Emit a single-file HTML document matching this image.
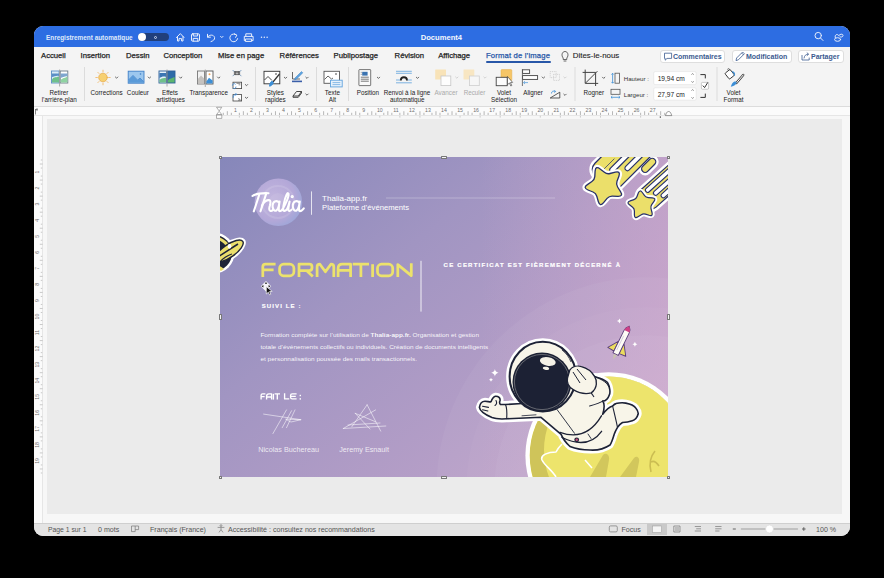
<!DOCTYPE html>
<html><head><meta charset="utf-8">
<style>
*{margin:0;padding:0;box-sizing:border-box}
html,body{width:884px;height:578px;overflow:hidden;background:#000}
body{position:relative;font-family:"Liberation Sans",sans-serif}
.a{position:absolute}
.t{position:absolute;white-space:nowrap;line-height:1}
#win{position:absolute;left:34px;top:26px;width:816px;height:510px;border-radius:9px;overflow:hidden;background:#f4f4f4}
#title{position:absolute;left:0;top:0;width:816px;height:21px;background:#2d6de2}
#tabs{position:absolute;left:0;top:21px;width:816px;height:18px;background:#f4f4f4}
#ribbon{position:absolute;left:0;top:38px;width:816px;height:43px;background:#f4f4f4;border-bottom:1px solid #dcdcdc}
.tab{font-size:7.7px;color:#222;-webkit-text-stroke:0.25px #222}
.lbl{font-size:6.3px;color:#222;text-align:center}
.sep{position:absolute;width:1px;background:#dadada;top:67px;height:34px}
.chev{position:absolute;width:4px;height:4px;border-right:1px solid #444;border-bottom:1px solid #444;transform:rotate(45deg)}
.btn{position:absolute;top:50px;height:13px;background:#fff;border:1px solid #dedede;border-radius:3px}
.st{font-size:7.1px;color:#555;top:526.8px}
</style></head>
<body>
<div id="win">
  <div id="title"></div>
  <div id="tabs"></div>
  <div id="ribbon"></div>
</div>

<!-- title bar content -->
<div class="t" style="left:46px;top:34.6px;font-size:6.4px;font-weight:bold;color:#dfe9fb">Enregistrement automatique</div>
<div class="a" style="left:138px;top:33px;width:31px;height:8px;border-radius:4px;background:#213f7a"></div>
<div class="a" style="left:138px;top:33px;width:8px;height:8px;border-radius:4px;background:#fff"></div>
<div class="a" style="left:154px;top:35.5px;width:3px;height:3px;border-radius:2px;border:0.8px solid #c9d6ee"></div>
<div class="t" style="left:420.7px;top:33.6px;font-size:7.6px;font-weight:bold;color:#f4f7fd">Document4</div>

<!-- tabs -->
<div class="t tab" style="left:41px;top:52px">Accueil</div>
<div class="t tab" style="left:80.5px;top:52px">Insertion</div>
<div class="t tab" style="left:126px;top:52px">Dessin</div>
<div class="t tab" style="left:163.4px;top:52px">Conception</div>
<div class="t tab" style="left:218px;top:52px">Mise en page</div>
<div class="t tab" style="left:279.6px;top:52px">Références</div>
<div class="t tab" style="left:333.6px;top:52px">Publipostage</div>
<div class="t tab" style="left:394.6px;top:52px">Révision</div>
<div class="t tab" style="left:438.2px;top:52px">Affichage</div>
<div class="t tab" style="left:486px;top:52px;color:#2857a8;-webkit-text-stroke:0.25px #2857a8;letter-spacing:0.15px">Format de l’image</div>
<div class="a" style="left:486px;top:61px;width:65px;height:2px;background:#2857a8;border-radius:1px"></div>
<div class="t tab" style="left:572.8px;top:52px;-webkit-text-stroke:0.1px #222;font-size:7.9px">Dites-le-nous</div>

<div class="btn" style="left:660px;width:65px"></div>
<div class="btn" style="left:731.5px;width:60px"></div>
<div class="btn" style="left:797.5px;width:46.5px"></div>
<div class="t" style="left:673px;top:53px;font-size:7px;font-weight:bold;color:#3b5a8f">Commentaires</div>
<div class="t" style="left:746px;top:53px;font-size:7px;font-weight:bold;color:#3b5a8f">Modification</div>
<div class="t" style="left:811px;top:53px;font-size:7px;font-weight:bold;color:#3b5a8f">Partager</div>


<svg class="a" style="left:0;top:0" width="884" height="578" viewBox="0 0 884 578">
<g fill="none" stroke="#e8eefc" stroke-width="1" stroke-linecap="round" stroke-linejoin="round">
  <!-- home -->
  <path d="M176.5 37.5 L180.3 33.6 L184 37.5 M177.5 36.6 V41 H179 V38.6 H181.6 V41 H183 V36.6"/>
  <!-- save -->
  <rect x="191.5" y="33.8" width="8" height="7.4" rx="1.2"/>
  <path d="M193.3 34 V36 H197.6 V34 M193.2 41 V38.4 H197.8 V41"/>
  <!-- undo -->
  <path d="M207.5 34.3 V37.2 H210.4 M207.8 37 C209 34.5 213.8 34.2 214.6 37.6 C215 39.6 213 41 211 41.6"/>
  <path d="M220.6 36.4 L221.8 37.6 L223 36.4"/>
  <!-- redo -->
  <path d="M236.6 35.2 A3.9 3.9 0 1 0 237.6 38.6 M234.4 33.8 L236.8 35.2 L235.6 37.4"/>
  <!-- print -->
  <path d="M245.8 36 V33.8 H251.6 V36 M245.6 40.6 H244.3 V36.4 H253.1 V40.6 H251.8 M245.8 39 H251.6 V41.4 H245.8 Z"/>
  <!-- search -->
  <circle cx="818.2" cy="35.6" r="3.2"/>
  <path d="M820.5 38 L823 40.5"/>
  <!-- collab -->
  <ellipse cx="837.6" cy="39.5" rx="3" ry="1.8"/>
  <path d="M835.3 37.6 C834.5 35 836.6 33.8 838 34.8 M838.4 35.8 C839.5 34.2 843 33.2 843 35.6 C843 37 840.8 37.5 840 36.8"/>
</g>
<g fill="#e8eefc"><circle cx="261.5" cy="37.3" r="0.75"/><circle cx="264.3" cy="37.3" r="0.75"/><circle cx="267.1" cy="37.3" r="0.75"/></g>

<!-- ribbon icons -->
<!-- Retirer arriere-plan -->
<g>
  <rect x="51.5" y="71" width="7.6" height="12" fill="#dcecf7" stroke="#5b8fc6" stroke-width="0.9"/>
  <rect x="60.2" y="71" width="7.6" height="12" fill="#fff" stroke="#6b7a88" stroke-width="0.9"/>
  <path d="M52 79.5 C54 76 56.5 78 59 76.5 V82.6 H52 Z" fill="#6fc08b"/>
  <path d="M60.6 80 C63 77.5 65 78.5 67.4 76.5 V82.6 H60.6 Z" fill="#8fd3a1"/>
  <path d="M52 73.5 H59 V76 C57 75 54 76.5 52 77 Z" fill="#5b8fc6"/>
  <path d="M60.6 73.5 H67.4 V76.3 C65 76 62.5 77.5 60.6 78 Z" fill="#7ea6cf"/>
  <path d="M59.6 69.5 V86.5" stroke="#999" stroke-width="0.8"/>
</g>
<!-- sun -->
<g stroke="#f0b35a" stroke-width="0.8" stroke-linecap="round">
  <circle cx="103" cy="77.5" r="4.3" fill="#f7d070" stroke="#e9ad4f"/>
  <path d="M103 70.2 V71.8 M103 83.2 V84.8 M95.8 77.5 H97.4 M108.6 77.5 H110.2 M97.9 72.4 L99 73.5 M107 81.5 L108.1 82.6 M97.9 82.6 L99 81.5 M107 73.5 L108.1 72.4"/>
</g>
<!-- couleur -->
<g>
  <rect x="128.2" y="71.2" width="15.8" height="12" fill="#9cc7ee" stroke="#3f7fc6" stroke-width="0.9"/>
  <path d="M128.6 80 L133 75.5 L137.6 80.2 L140 78 L143.6 81.8" fill="none" stroke="#3f7fc6" stroke-width="0.9"/>
  <path d="M128.6 80 L133 75.5 L137.6 80.2 L140 78 L143.6 81.8 V82.8 H128.6Z" fill="#5a9ad8"/>
  <circle cx="140.5" cy="74" r="0.8" fill="#3f7fc6"/>
</g>
<!-- effets artistiques -->
<g>
  <rect x="159" y="71" width="7.5" height="12" fill="#e5f1f9" stroke="#2d5f99" stroke-width="0.9"/>
  <rect x="167.5" y="71" width="7.5" height="12" fill="#2d6ba8" stroke="#2d5f99" stroke-width="0.9"/>
  <path d="M159.4 73 H166 V77 C164 76 161 77 159.4 78Z" fill="#3b76b3"/>
  <path d="M159.4 80 C161.5 78 164 78.5 166 77.6 V82.6 H159.4Z" fill="#6fc08b"/>
  <path d="M167.9 80.5 C170 78 172 78.5 174.6 77 V82.6 H167.9Z" fill="#5cb56e"/>
  <path d="M167 69.5 V86.5" stroke="#999" stroke-width="0.8"/>
</g>
<!-- transparence -->
<g>
  <rect x="197.5" y="71" width="7" height="13" fill="#f2f2f2" stroke="#777" stroke-width="0.9"/>
  <rect x="206" y="71" width="7" height="13" fill="#fff" stroke="#555" stroke-width="0.9"/>
  <path d="M197.9 83.6 V79 L201 75.5 L204.2 78.5 V83.6Z" fill="#c5c2bf"/>
  <path d="M206.4 81.5 L209 77.8 L212.6 80.5 V83.6 H206.4Z" fill="#3d8fd6"/>
  <circle cx="209.5" cy="74.3" r="1" fill="#f2a55a"/>
  <path d="M205.3 69.5 V87" stroke="#999" stroke-width="0.8"/>
</g>
<!-- small icons col -->
<g fill="none" stroke-width="0.8">
  <path d="M232.6 70 L234.6 72 M241.4 70 L239.4 72 M232.6 76.2 L234.6 74.2 M241.4 76.2 L239.4 74.2" stroke="#6a8fb8"/>
  <path d="M234.4 71.6 H239.6 V74.6 H234.4 Z M235.6 74.6 V71.8 L237 73.4 L238.4 71.8 V74.6" stroke="#333" stroke-width="0.7"/>
  <rect x="233" y="82.2" width="8.6" height="6.4" fill="#fff" stroke="#444"/>
  <path d="M236.5 83.4 H240.4 M238.6 84.8 H240.4" stroke="#444" stroke-width="0.6"/>
  <path d="M232.4 85.6 C232.4 83.6 234.6 83 235.6 84.4 M236 86.6 C236 88.8 233.6 89.2 232.8 87.8" stroke="#4a90d6" stroke-width="0.9"/>
  <rect x="233" y="94.6" width="8.6" height="6.4" fill="#fff" stroke="#444"/>
  <path d="M238.4 98 L240.6 100.4 M238 100.2 H240.4" stroke="#444" stroke-width="0.6"/>
  <path d="M233.2 97.8 C233 95.2 234.8 93.8 236.6 94.4 M235.6 93.2 L236.8 94.4 L235.4 95.4" stroke="#4a90d6" stroke-width="0.9"/>
</g>
<!-- styles rapides -->
<g fill="none" stroke-width="0.9">
  <rect x="264" y="71.3" width="15.8" height="12.5" stroke="#333" fill="#fff"/>
  <path d="M264.5 80 L268 76.5 L272 80.5" stroke="#333"/>
  <circle cx="276" cy="74" r="0.8" fill="#333" stroke="none"/>
  <path d="M279.5 74 L273 82" stroke="#333" stroke-width="1.2"/>
  <path d="M269.5 86.2 C271 86 273 84.5 273.4 82.4 L272 81.2 C270 82 269.6 84.5 269.5 86.2Z" fill="#3d8fd6" stroke="#3d8fd6"/>
</g>
<!-- pen -->
<g>
  <path d="M292.5 72 V79 H300" fill="none" stroke="#444" stroke-width="0.8"/>
  <path d="M295 78 L301.5 71.5 L302.8 72.8 L296.3 79.3 L294.6 79.8Z" fill="#5ba3e0" stroke="#3d7fc0" stroke-width="0.5"/>
  <rect x="292" y="80.6" width="10" height="1.6" fill="#3a5ea8"/>
</g>
<!-- eraser -->
<g fill="none" stroke="#333" stroke-width="0.9">
  <path d="M293 96 L296.5 91.5 H301.5 L298.3 96 Z M293 96 V97.3 H298.3 L301.5 93 V91.5"/>
</g>
<!-- texte alt -->
<g fill="none" stroke-width="0.9">
  <rect x="324" y="71.3" width="15.5" height="12" stroke="#555" fill="#fff"/>
  <path d="M324.5 79.5 L328 76 L331.5 79 L333 78" stroke="#555"/>
  <circle cx="336" cy="74" r="0.8" fill="#333" stroke="none"/>
  <rect x="330.5" y="80.2" width="11.7" height="6.7" fill="#e8f2fb" stroke="#5ea2dd"/>
  <path d="M332.5 82.6 H340.3 M332.5 84.6 H340.3" stroke="#5ea2dd" stroke-width="0.7"/>
</g>
<!-- position -->
<g fill="none" stroke-width="0.8">
  <rect x="358.9" y="69.6" width="11.8" height="16" fill="#fafafa" stroke="#555" rx="0.5"/>
  <rect x="362.2" y="71.8" width="5.4" height="3.8" fill="#3b73b0" stroke="none"/>
  <path d="M360.8 72.3 H361.6 M360.8 74.3 H361.6 M360.8 77.2 H368.8 M360.8 79.2 H368.8 M360.8 81.2 H368.8" stroke="#555"/>
</g>
<!-- renvoi -->
<g fill="none">
  <path d="M396 71.3 H411.8 M396 73.3 H411.8 M396 80 H400 M407.8 80 H411.8 M396 82.8 H411.8" stroke="#5ea2dd" stroke-width="0.8"/>
  <path d="M400.8 80.4 C400.8 76.2 407 76.2 407 80.4" stroke="#222" stroke-width="1.8"/>
</g>
<!-- avancer / reculer -->
<g>
  <rect x="435.2" y="69.6" width="10.8" height="10" fill="#f8e3b8" rx="0.5"/>
  <rect x="441" y="76" width="9.8" height="9.6" fill="#fdfdfd" stroke="#c7c7c7" stroke-width="0.8"/>
  <rect x="463.5" y="69.6" width="10.8" height="10" fill="#f8e6c2" rx="0.5"/>
  <rect x="469.5" y="76" width="9.8" height="9.6" fill="#f6f6f6" stroke="#cfcfcf" stroke-width="0.8"/>
</g>
<!-- volet selection -->
<g>
  <rect x="501" y="69.6" width="10.8" height="11" fill="#f6c667" stroke="#e3ad47" stroke-width="0.5" rx="0.8"/>
  <rect x="496.2" y="77.3" width="11" height="8.4" fill="#fcfcfc" stroke="#444" stroke-width="0.9"/>
  <path d="M507.5 76.5 V84.6 L509.4 83 L510.8 86 L511.8 85.5 L510.4 82.6 L512.6 82.4Z" fill="#fff" stroke="#333" stroke-width="0.6"/>
</g>
<!-- aligner -->
<g fill="none" stroke="#444" stroke-width="0.9">
  <rect x="522.6" y="69.8" width="7" height="3.6" fill="#fff"/>
  <rect x="522.6" y="75.6" width="15" height="3.8" fill="#fff"/>
  <path d="M522.4 69 V86" stroke="#555" stroke-width="0.8"/>
  <path d="M523.5 82.6 H528 M523.5 82.6 L525 81.2 M523.5 82.6 L525 84" stroke="#5ea2dd" stroke-width="0.8"/>
</g>
<g fill="none" stroke="#c9c9c9" stroke-width="0.8" stroke-dasharray="1 0.8">
  <rect x="550.2" y="71.6" width="6" height="6"/>
  <rect x="553.5" y="74.4" width="6" height="6"/>
</g>
<g fill="none" stroke-width="0.8">
  <path d="M550.2 98 H559.8 V92.2Z" stroke="#333"/>
  <path d="M551.5 93.5 C551.5 91 553.5 90.6 555.4 91.5 M554.4 90.2 L555.6 91.5 L554.2 92.5" stroke="#3d8fd6"/>
</g>
<!-- rogner -->
<g fill="none" stroke="#444" stroke-width="1">
  <path d="M585.2 69.6 V83.4 H598.2 M582.6 72.4 H595.6 V86 M585.6 83 L597.4 71.2"/>
</g>
<!-- hauteur/largeur icons -->
<g fill="none" stroke-width="0.8">
  <rect x="615" y="73.2" width="4.6" height="10" stroke="#555"/>
  <path d="M612.6 73.3 V83.2 M611.4 74.6 L612.6 73.3 L613.8 74.6 M611.4 81.9 L612.6 83.2 L613.8 81.9" stroke="#3d8fd6"/>
  <rect x="611" y="89.3" width="9" height="5" stroke="#555"/>
  <path d="M611 97.3 H620 M612.3 96.1 L611 97.3 L612.3 98.5 M618.7 96.1 L620 97.3 L618.7 98.5" stroke="#3d8fd6"/>
</g>
<!-- inputs -->
<rect x="653.7" y="71.6" width="42.5" height="13" fill="#fff" stroke="#e0e0e0" stroke-width="0.6" rx="1.5"/>
<rect x="653.7" y="87.8" width="42.5" height="12.4" fill="#fff" stroke="#e0e0e0" stroke-width="0.6" rx="1.5"/>
<g fill="none" stroke="#444" stroke-width="0.7">
  <path d="M691.6 74.6 L692.6 73.6 L693.6 74.6 M691.6 81.4 L692.6 82.4 L693.6 81.4"/>
  <path d="M691.6 90.6 L692.6 89.6 L693.6 90.6 M691.6 97.4 L692.6 98.4 L693.6 97.4"/>
  <path d="M700.4 74.6 H705.3 V78.4 M700.4 97.4 H705.3 V93.6" stroke="#333" stroke-width="1"/>
</g>
<rect x="701.4" y="82.4" width="7.2" height="6.8" fill="#fff" stroke="#aaa" stroke-width="0.6" rx="1"/>
<path d="M702.8 85.6 L704.6 87.6 L707.8 82.4" fill="none" stroke="#333" stroke-width="1"/>
<!-- volet format -->
<g>
  <rect x="726.4" y="70.6" width="6.6" height="7.4" rx="1" transform="rotate(-38 729.7 74.3)" fill="#fff" stroke="#333" stroke-width="0.9"/>
  <path d="M727.4 69.4 C728.2 68.4 729.4 68.6 729.8 69.6" fill="none" stroke="#333" stroke-width="0.8"/>
  <path d="M732.2 71.6 C734 72.2 734.8 73.8 734.4 75.6" fill="none" stroke="#3d8fd6" stroke-width="1.2"/>
  <path d="M743.2 75 L736.4 83" stroke="#444" stroke-width="2.4" stroke-linecap="round"/>
  <path d="M743.2 75 L736.4 83" stroke="#fff" stroke-width="1" stroke-linecap="round"/>
  <path d="M730.8 86.8 C733 86.6 736 85 736.8 82.6 L735.2 81.2 C732.8 81.8 731.4 84.4 730.8 86.8Z" fill="#3d8fd6"/>
</g>
<!-- chevrons -->
<g fill="none" stroke="#444" stroke-width="0.8" stroke-linecap="round">
  <path d="M115.4 77 L116.6 78.2 L117.8 77"/>
  <path d="M148.2 77 L149.4 78.2 L150.6 77"/>
  <path d="M179.5 77 L180.7 78.2 L181.9 77"/>
  <path d="M217.5 77 L218.7 78.2 L219.9 77"/>
  <path d="M245.3 84.5 L246.5 85.7 L247.7 84.5"/>
  <path d="M245.3 97.2 L246.5 98.4 L247.7 97.2"/>
  <path d="M284.3 77.2 L285.5 78.4 L286.7 77.2"/>
  <path d="M305.8 77.2 L307 78.4 L308.2 77.2"/>
  <path d="M305.8 94 L307 95.2 L308.2 94"/>
  <path d="M377.3 77.2 L378.5 78.4 L379.7 77.2"/>
  <path d="M416.3 77.2 L417.5 78.4 L418.7 77.2"/>
  <path d="M542.2 77 L543.4 78.2 L544.6 77"/>
  <path d="M563.8 94.2 L565 95.4 L566.2 94.2"/>
  <path d="M602.5 77.2 L603.7 78.4 L604.9 77.2"/>
</g>
<g fill="none" stroke="#c9c9c9" stroke-width="0.8" stroke-linecap="round">
  <path d="M455.6 77 L456.8 78.2 L458 77"/>
  <path d="M483.8 77 L485 78.2 L486.2 77"/>
  <path d="M563.8 77 L565 78.2 L566.2 77"/>
</g>
<!-- separators -->
<g stroke="#dcdcdc" stroke-width="1">
  <path d="M84.5 67 V101 M255.5 67 V101 M316.5 67 V101 M348.5 67 V101 M575 67 V101 M717 67 V101"/>
</g>
</svg>

<div class="t lbl" style="left:19.0px;top:89.8px;width:80px;color:#222">Retirer</div>
<div class="t lbl" style="left:19.2px;top:97.1px;width:80px;color:#222">l’arrière-plan</div>
<div class="t lbl" style="left:66.5px;top:90.0px;width:80px;color:#222">Corrections</div>
<div class="t lbl" style="left:97.9px;top:90.0px;width:80px;color:#222">Couleur</div>
<div class="t lbl" style="left:130.0px;top:90.0px;width:80px;color:#222">Effets</div>
<div class="t lbl" style="left:130.5px;top:96.8px;width:80px;color:#222">artistiques</div>
<div class="t lbl" style="left:168.7px;top:90.0px;width:80px;color:#222">Transparence</div>
<div class="t lbl" style="left:235.4px;top:90.0px;width:80px;color:#222">Styles</div>
<div class="t lbl" style="left:235.4px;top:96.7px;width:80px;color:#222">rapides</div>
<div class="t lbl" style="left:292.4px;top:90.0px;width:80px;color:#222">Texte</div>
<div class="t lbl" style="left:292.4px;top:96.7px;width:80px;color:#222">Alt</div>
<div class="t lbl" style="left:327.9px;top:90.0px;width:80px;color:#222">Position</div>
<div class="t lbl" style="left:367.0px;top:90.0px;width:80px;color:#222">Renvoi à la ligne</div>
<div class="t lbl" style="left:367.3px;top:96.8px;width:80px;color:#222">automatique</div>
<div class="t lbl" style="left:406.0px;top:90.0px;width:80px;color:#a9a9a9">Avancer</div>
<div class="t lbl" style="left:434.5px;top:90.0px;width:80px;color:#a9a9a9">Reculer</div>
<div class="t lbl" style="left:464.0px;top:90.0px;width:80px;color:#222">Volet</div>
<div class="t lbl" style="left:464.0px;top:96.8px;width:80px;color:#222">Sélection</div>
<div class="t lbl" style="left:493.0px;top:90.0px;width:80px;color:#222">Aligner</div>
<div class="t lbl" style="left:553.9px;top:90.0px;width:80px;color:#222">Rogner</div>
<div class="t lbl" style="left:693.6px;top:90.0px;width:80px;color:#222">Volet</div>
<div class="t lbl" style="left:693.6px;top:96.8px;width:80px;color:#222">Format</div>
<div class="t" style="left:623.8px;top:76.2px;font-size:6.1px;color:#333">Hauteur :</div>
<div class="t" style="left:623.8px;top:92px;font-size:6.1px;color:#333">Largeur :</div>
<div class="t" style="left:657.7px;top:75.9px;font-size:6.6px;color:#222">19,94 cm</div>
<div class="t" style="left:657.7px;top:91.7px;font-size:6.6px;color:#222">27,97 cm</div>
<svg class="a" style="left:0;top:0" width="884" height="578" viewBox="0 0 884 578">
<g fill="none" stroke="#3b5a8f" stroke-width="0.8" stroke-linejoin="round">
  <path d="M563.2 58 C561 55.5 562 51.5 565 51.5 C568 51.5 569 55.5 566.8 58 V59.5 H563.2 Z M563.6 61 H566.4" stroke="#444"/>
  <path d="M664.5 53.2 H671.6 V58.4 H667 L665.2 60.2 V58.4 H664.5 Z"/>
  <path d="M736 60.6 L736.6 58 L742.6 52 L744.4 53.8 L738.4 59.8 Z M741.6 53 L743.4 54.8"/>
  <path d="M802 55 V60 H809.2 V57.6 M804 58.4 C804.4 55.4 806 54.2 808.4 54.2 M806.8 52.6 L808.6 54.2 L806.8 55.8"/>
</g>
</svg>
<!-- ruler -->
<div class="a" style="left:34px;top:107px;width:816px;height:9px;background:#fbfbfb;border-bottom:1px solid #e6e6e6"></div>
<!-- vertical ruler -->
<div class="a" style="left:34px;top:116px;width:9px;height:407px;background:#fbfbfb;border-right:1px solid #e6e6e6"></div>
<!-- doc area -->
<div class="a" style="left:43px;top:116px;width:807px;height:407px;background:#f7f7f7"></div>
<div class="a" style="left:47px;top:119px;width:795px;height:395px;background:#ebebeb"></div>
<!-- status bar -->
<div class="a" style="left:34px;top:523px;width:816px;height:13px;background:#e4e4e4;border-top:1px solid #cfcfcf;border-radius:0 0 9px 9px"></div>
<div class="t st" style="left:48px;font-size:6.8px">Page 1 sur 1</div>
<div class="t st" style="left:98px">0 mots</div>
<div class="t st" style="left:150px">Français (France)</div>
<div class="t st" style="left:228px">Accessibilité : consultez nos recommandations</div>
<div class="t st" style="left:621.4px">Focus</div>
<div class="t st" style="left:816px">100 %</div>

<svg class="a" style="left:0;top:0" width="884" height="578" viewBox="0 0 884 578">
<path d="M223.31 112.8 V115 M227.33 111.2 V115 M231.34 112.8 V115 M239.36 112.8 V115 M243.38 111.2 V115 M247.39 112.8 V115 M255.41 112.8 V115 M259.43 111.2 V115 M263.44 112.8 V115 M271.46 112.8 V115 M275.48 111.2 V115 M279.49 112.8 V115 M287.51 112.8 V115 M291.53 111.2 V115 M295.54 112.8 V115 M303.56 112.8 V115 M307.58 111.2 V115 M311.59 112.8 V115 M319.61 112.8 V115 M323.62 111.2 V115 M327.64 112.8 V115 M335.66 112.8 V115 M339.68 111.2 V115 M343.69 112.8 V115 M351.71 112.8 V115 M355.73 111.2 V115 M359.74 112.8 V115 M367.76 112.8 V115 M371.77 111.2 V115 M375.79 112.8 V115 M383.81 112.8 V115 M387.83 111.2 V115 M391.84 112.8 V115 M399.86 112.8 V115 M403.88 111.2 V115 M407.89 112.8 V115 M415.91 112.8 V115 M419.93 111.2 V115 M423.94 112.8 V115 M431.96 112.8 V115 M435.98 111.2 V115 M439.99 112.8 V115 M448.01 112.8 V115 M452.03 111.2 V115 M456.04 112.8 V115 M464.06 112.8 V115 M468.08 111.2 V115 M472.09 112.8 V115 M480.11 112.8 V115 M484.12 111.2 V115 M488.14 112.8 V115 M496.16 112.8 V115 M500.18 111.2 V115 M504.19 112.8 V115 M512.21 112.8 V115 M516.23 111.2 V115 M520.24 112.8 V115 M528.26 112.8 V115 M532.28 111.2 V115 M536.29 112.8 V115 M544.31 112.8 V115 M548.33 111.2 V115 M552.34 112.8 V115 M560.36 112.8 V115 M564.38 111.2 V115 M568.39 112.8 V115 M576.41 112.8 V115 M580.42 111.2 V115 M584.44 112.8 V115 M592.46 112.8 V115 M596.48 111.2 V115 M600.49 112.8 V115 M608.51 112.8 V115 M612.53 111.2 V115 M616.54 112.8 V115 M624.56 112.8 V115 M628.58 111.2 V115 M632.59 112.8 V115 M640.61 112.8 V115 M644.62 111.2 V115 M648.64 112.8 V115 M656.66 112.8 V115 M660.67 111.2 V115 M664.69 112.8 V115" stroke="#9a9a9a" stroke-width="0.7"/>
<path d="M239.36 115.8 V117.6 M259.43 115.8 V117.6 M279.49 115.8 V117.6 M299.55 115.8 V117.6 M319.61 115.8 V117.6 M339.68 115.8 V117.6 M359.74 115.8 V117.6 M379.80 115.8 V117.6 M399.86 115.8 V117.6 M419.93 115.8 V117.6 M439.99 115.8 V117.6 M460.05 115.8 V117.6 M480.11 115.8 V117.6 M500.18 115.8 V117.6 M520.24 115.8 V117.6 M540.30 115.8 V117.6 M560.36 115.8 V117.6 M580.42 115.8 V117.6 M600.49 115.8 V117.6 M620.55 115.8 V117.6 M640.61 115.8 V117.6" stroke="#b8b8b8" stroke-width="0.7"/>
<text x="235.35" y="111.9" font-size="5.2" fill="#707070" text-anchor="middle" font-family="Liberation Sans">1</text>
<text x="251.40" y="111.9" font-size="5.2" fill="#707070" text-anchor="middle" font-family="Liberation Sans">2</text>
<text x="267.45" y="111.9" font-size="5.2" fill="#707070" text-anchor="middle" font-family="Liberation Sans">3</text>
<text x="283.50" y="111.9" font-size="5.2" fill="#707070" text-anchor="middle" font-family="Liberation Sans">4</text>
<text x="299.55" y="111.9" font-size="5.2" fill="#707070" text-anchor="middle" font-family="Liberation Sans">5</text>
<text x="315.60" y="111.9" font-size="5.2" fill="#707070" text-anchor="middle" font-family="Liberation Sans">6</text>
<text x="331.65" y="111.9" font-size="5.2" fill="#707070" text-anchor="middle" font-family="Liberation Sans">7</text>
<text x="347.70" y="111.9" font-size="5.2" fill="#707070" text-anchor="middle" font-family="Liberation Sans">8</text>
<text x="363.75" y="111.9" font-size="5.2" fill="#707070" text-anchor="middle" font-family="Liberation Sans">9</text>
<text x="379.80" y="111.9" font-size="5.2" fill="#707070" text-anchor="middle" font-family="Liberation Sans">10</text>
<text x="395.85" y="111.9" font-size="5.2" fill="#707070" text-anchor="middle" font-family="Liberation Sans">11</text>
<text x="411.90" y="111.9" font-size="5.2" fill="#707070" text-anchor="middle" font-family="Liberation Sans">12</text>
<text x="427.95" y="111.9" font-size="5.2" fill="#707070" text-anchor="middle" font-family="Liberation Sans">13</text>
<text x="444.00" y="111.9" font-size="5.2" fill="#707070" text-anchor="middle" font-family="Liberation Sans">14</text>
<text x="460.05" y="111.9" font-size="5.2" fill="#707070" text-anchor="middle" font-family="Liberation Sans">15</text>
<text x="476.10" y="111.9" font-size="5.2" fill="#707070" text-anchor="middle" font-family="Liberation Sans">16</text>
<text x="492.15" y="111.9" font-size="5.2" fill="#707070" text-anchor="middle" font-family="Liberation Sans">17</text>
<text x="508.20" y="111.9" font-size="5.2" fill="#707070" text-anchor="middle" font-family="Liberation Sans">18</text>
<text x="524.25" y="111.9" font-size="5.2" fill="#707070" text-anchor="middle" font-family="Liberation Sans">19</text>
<text x="540.30" y="111.9" font-size="5.2" fill="#707070" text-anchor="middle" font-family="Liberation Sans">20</text>
<text x="556.35" y="111.9" font-size="5.2" fill="#707070" text-anchor="middle" font-family="Liberation Sans">21</text>
<text x="572.40" y="111.9" font-size="5.2" fill="#707070" text-anchor="middle" font-family="Liberation Sans">22</text>
<text x="588.45" y="111.9" font-size="5.2" fill="#707070" text-anchor="middle" font-family="Liberation Sans">23</text>
<text x="604.50" y="111.9" font-size="5.2" fill="#707070" text-anchor="middle" font-family="Liberation Sans">24</text>
<text x="620.55" y="111.9" font-size="5.2" fill="#707070" text-anchor="middle" font-family="Liberation Sans">25</text>
<text x="636.60" y="111.9" font-size="5.2" fill="#707070" text-anchor="middle" font-family="Liberation Sans">26</text>
<text x="652.65" y="111.9" font-size="5.2" fill="#707070" text-anchor="middle" font-family="Liberation Sans">27</text>
<path d="M216.5 107.3 H221.8 L219.15 110.9 Z M219.15 111.3 L216.5 114.6 H221.8 Z M216.5 115 H221.8 V118.4 H216.5Z" fill="#fff" stroke="#7a7a7a" stroke-width="0.6"/>
<path d="M665.4 115.6 H671.8 L671 113.6 C670 110.8 667.2 110.8 666.2 113.6Z" fill="#fff" stroke="#555" stroke-width="0.6"/>
<path d="M660.3 116.2 V118" stroke="#333" stroke-width="0.8"/>
<path d="M40.8 160.01 H42.2 M39.8 164.03 H42.6 M40.8 168.04 H42.2 M40.8 176.06 H42.2 M39.8 180.07 H42.6 M40.8 184.09 H42.2 M40.8 192.11 H42.2 M39.8 196.12 H42.6 M40.8 200.14 H42.2 M40.8 208.16 H42.2 M39.8 212.18 H42.6 M40.8 216.19 H42.2 M40.8 224.21 H42.2 M39.8 228.23 H42.6 M40.8 232.24 H42.2 M40.8 240.26 H42.2 M39.8 244.28 H42.6 M40.8 248.29 H42.2 M40.8 256.31 H42.2 M39.8 260.32 H42.6 M40.8 264.34 H42.2 M40.8 272.36 H42.2 M39.8 276.38 H42.6 M40.8 280.39 H42.2 M40.8 288.41 H42.2 M39.8 292.43 H42.6 M40.8 296.44 H42.2 M40.8 304.46 H42.2 M39.8 308.48 H42.6 M40.8 312.49 H42.2 M40.8 320.51 H42.2 M39.8 324.52 H42.6 M40.8 328.54 H42.2 M40.8 336.56 H42.2 M39.8 340.58 H42.6 M40.8 344.59 H42.2 M40.8 352.61 H42.2 M39.8 356.62 H42.6 M40.8 360.64 H42.2 M40.8 368.66 H42.2 M39.8 372.68 H42.6 M40.8 376.69 H42.2 M40.8 384.71 H42.2 M39.8 388.73 H42.6 M40.8 392.74 H42.2 M40.8 400.76 H42.2 M39.8 404.77 H42.6 M40.8 408.79 H42.2 M40.8 416.81 H42.2 M39.8 420.82 H42.6 M40.8 424.84 H42.2 M40.8 432.86 H42.2 M39.8 436.88 H42.6 M40.8 440.89 H42.2 M40.8 448.91 H42.2 M39.8 452.93 H42.6 M40.8 456.94 H42.2 M40.8 464.96 H42.2 M39.8 468.98 H42.6 M40.8 472.99 H42.2" stroke="#a8a8a8" stroke-width="0.6"/>
<text x="0" y="0" transform="translate(38.6 172.05) rotate(-90)" font-size="5.2" fill="#707070" text-anchor="middle" font-family="Liberation Sans">1</text>
<text x="0" y="0" transform="translate(38.6 188.10) rotate(-90)" font-size="5.2" fill="#707070" text-anchor="middle" font-family="Liberation Sans">2</text>
<text x="0" y="0" transform="translate(38.6 204.15) rotate(-90)" font-size="5.2" fill="#707070" text-anchor="middle" font-family="Liberation Sans">3</text>
<text x="0" y="0" transform="translate(38.6 220.20) rotate(-90)" font-size="5.2" fill="#707070" text-anchor="middle" font-family="Liberation Sans">4</text>
<text x="0" y="0" transform="translate(38.6 236.25) rotate(-90)" font-size="5.2" fill="#707070" text-anchor="middle" font-family="Liberation Sans">5</text>
<text x="0" y="0" transform="translate(38.6 252.30) rotate(-90)" font-size="5.2" fill="#707070" text-anchor="middle" font-family="Liberation Sans">6</text>
<text x="0" y="0" transform="translate(38.6 268.35) rotate(-90)" font-size="5.2" fill="#707070" text-anchor="middle" font-family="Liberation Sans">7</text>
<text x="0" y="0" transform="translate(38.6 284.40) rotate(-90)" font-size="5.2" fill="#707070" text-anchor="middle" font-family="Liberation Sans">8</text>
<text x="0" y="0" transform="translate(38.6 300.45) rotate(-90)" font-size="5.2" fill="#707070" text-anchor="middle" font-family="Liberation Sans">9</text>
<text x="0" y="0" transform="translate(38.6 316.50) rotate(-90)" font-size="5.2" fill="#707070" text-anchor="middle" font-family="Liberation Sans">10</text>
<text x="0" y="0" transform="translate(38.6 332.55) rotate(-90)" font-size="5.2" fill="#707070" text-anchor="middle" font-family="Liberation Sans">11</text>
<text x="0" y="0" transform="translate(38.6 348.60) rotate(-90)" font-size="5.2" fill="#707070" text-anchor="middle" font-family="Liberation Sans">12</text>
<text x="0" y="0" transform="translate(38.6 364.65) rotate(-90)" font-size="5.2" fill="#707070" text-anchor="middle" font-family="Liberation Sans">13</text>
<text x="0" y="0" transform="translate(38.6 380.70) rotate(-90)" font-size="5.2" fill="#707070" text-anchor="middle" font-family="Liberation Sans">14</text>
<text x="0" y="0" transform="translate(38.6 396.75) rotate(-90)" font-size="5.2" fill="#707070" text-anchor="middle" font-family="Liberation Sans">15</text>
<text x="0" y="0" transform="translate(38.6 412.80) rotate(-90)" font-size="5.2" fill="#707070" text-anchor="middle" font-family="Liberation Sans">16</text>
<text x="0" y="0" transform="translate(38.6 428.85) rotate(-90)" font-size="5.2" fill="#707070" text-anchor="middle" font-family="Liberation Sans">17</text>
<text x="0" y="0" transform="translate(38.6 444.90) rotate(-90)" font-size="5.2" fill="#707070" text-anchor="middle" font-family="Liberation Sans">18</text>
<text x="0" y="0" transform="translate(38.6 460.95) rotate(-90)" font-size="5.2" fill="#707070" text-anchor="middle" font-family="Liberation Sans">19</text>
<path d="M35.5 109 V114.5 M35.5 109.6 H37.6 M37 108.2 V110.8" stroke="#555" stroke-width="0.7" fill="none"/>
<g fill="none" stroke="#777" stroke-width="0.7">
<path d="M131.5 526 H135.2 V531.6 H131.5Z M135.2 526 H138.6 V529.6 H135.2" />
<circle cx="221" cy="525.6" r="0.9"/><path d="M217.6 527.4 H224.4 M221 527.4 V529.6 L219 532.4 M221 529.6 L223 532.4" />
<rect x="609.3" y="525.9" width="8" height="6" rx="1.3"/>
<path d="M673.8 526 H680 V532 H673.8Z M675 528 H679 M675 530 H679" />
<path d="M694.8 526.5 H701 M696.2 528.8 H701 M694.8 531 H701" />
<path d="M715.2 526.5 H721.5 M715.2 528.8 H721.5 M715.2 531 H719.5" />
<path d="M732.8 529 H735.8 M802 529 H805.6 M803.8 527.2 V530.8" stroke="#555" stroke-width="0.9"/>
<path d="M741.4 529 H797.5" stroke="#b5b5b5" stroke-width="1.4" stroke-linecap="round"/>
</g>
<rect x="647" y="523.8" width="20" height="11.2" fill="#c9c9c9"/>
<rect x="652.5" y="526" width="9" height="6.5" fill="#f4f4f4" stroke="#999" stroke-width="0.5"/>
<circle cx="769.5" cy="529" r="4" fill="#fff" stroke="#cfcfcf" stroke-width="0.5"/>

</svg>
<!-- certificate -->
<svg class="a" style="left:220px;top:157px" width="448" height="320" viewBox="0 0 448 320">
<defs>
  <linearGradient id="bg" x1="0" y1="0" x2="340" y2="420" gradientUnits="userSpaceOnUse">
    <stop offset="0" stop-color="#8687ba"/>
    <stop offset="0.35" stop-color="#a195c2"/>
    <stop offset="0.7" stop-color="#b59ec7"/>
    <stop offset="1" stop-color="#c8a6ca"/>
  </linearGradient>
  <radialGradient id="logo" cx="0.38" cy="0.42" r="0.7">
    <stop offset="0" stop-color="#c2b6de"/>
    <stop offset="0.65" stop-color="#b4a8d8"/>
    <stop offset="1" stop-color="#98a6d8"/>
  </radialGradient>
  <linearGradient id="pk" x1="260" y1="0" x2="448" y2="0" gradientUnits="userSpaceOnUse">
    <stop offset="0" stop-color="#d2a9cd" stop-opacity="0"/>
    <stop offset="1" stop-color="#d2a9cd" stop-opacity="0.55"/>
  </linearGradient>
  <clipPath id="cc"><rect width="448" height="320"/></clipPath>
  <clipPath id="mc"><circle cx="608.7" cy="455.5" r="79"/></clipPath>
</defs>
<g clip-path="url(#cc)">
<rect width="448" height="320" fill="url(#bg)"/>
<rect width="448" height="320" fill="url(#pk)"/>
<circle cx="426.5" cy="330.3" r="210" fill="#fff" opacity="0.045"/>
<circle cx="426.5" cy="330.3" r="180" fill="#fff" opacity="0.03"/>
<circle cx="426.5" cy="330.3" r="152" fill="#fff" opacity="0.045"/>

<!-- logo -->
<circle cx="58.4" cy="45.2" r="23.8" fill="url(#logo)"/>
<circle cx="58" cy="45" r="16" fill="none" stroke="#fff" stroke-opacity="0.12" stroke-width="2"/>
<circle cx="58" cy="45" r="9" fill="#fff" fill-opacity="0.08"/>
<g transform="translate(-220 -157)" fill="none" stroke="#fff" stroke-width="2.1" stroke-linecap="round" stroke-linejoin="round">
<path d="M252.4 196 C256 193.4 263 193 268.5 193.2"/>
<path d="M259.2 194.8 C257.6 200 255.6 206 253.8 211.3"/>
<path d="M266.2 193.6 C264.2 200 262.2 206 260.5 211.3"/>
<path d="M261.8 206 C263.3 202 267 199.6 269.5 200.2 C271 200.8 270.6 203 269.9 205.5 C269.1 208 268.7 210.6 270.6 211 C271.6 211.2 272.4 210.4 273 209.6"/>
<path d="M279 202.6 C277.5 200.2 273.2 200.6 272.6 205 C272.2 209 274.3 211.5 276.3 210.5 C278.1 209.5 279.1 205.2 279.6 201.6 C279.1 205 278.2 209 279.1 210.8 C280.1 211.6 281.6 210.6 282.6 209.2 C285 205 288 199 288.6 195.2 C289 192.6 287.6 192.6 286.6 194.6 C285.1 198 283.1 206 283.1 209.5 C283.1 211.5 285.2 211.2 286.8 209.6 C288 208 289 204 289.6 201.6 C289.1 204.2 288.2 208 288.4 210 C288.7 211.5 290.2 211.1 291.6 209.6"/>
<path d="M299.2 202.6 C297.7 200.2 293.4 200.6 292.8 205 C292.4 209 294.5 211.5 296.5 210.5 C298.3 209.5 299.3 205.2 299.8 201.6 C299.3 205 298.4 209 299.3 210.8 C300.3 211.6 302.2 210.6 303.8 208.4"/>
<circle cx="292.2" cy="196.6" r="0.6" fill="#fff"/>
</g>
<path d="M91.5 34.4 V57.8" stroke="#fff" stroke-opacity="0.85" stroke-width="0.9"/>
<text x="102.1" y="44.3" font-family="Liberation Sans" font-size="8" fill="#fff" textLength="45" lengthAdjust="spacingAndGlyphs">Thalia-app.fr</text>
<text x="102.1" y="53" font-family="Liberation Sans" font-size="7.8" fill="#fff" textLength="87" lengthAdjust="spacingAndGlyphs">Plateforme d’événements</text>
<path d="M166 41 H335" stroke="#fff" stroke-opacity="0.28" stroke-width="1"/>

<!-- FORMATION -->
<g transform="translate(-220 -157)" fill="none" stroke="#ece26c" stroke-width="2.75" stroke-linejoin="round">
<path d="M262.8 277 V267 Q262.8 264.2 265.6 264.2 H275.6 M262.8 269.8 H273.6"/>
<rect x="279.6" y="264.2" width="14.3" height="11.6" rx="4"/>
<path d="M299 277 V264.2 H309.2 Q312 264.2 312 267 V267.8 Q312 270.6 309.2 270.6 H299 M306.5 270.6 L312.8 276.6"/>
<path d="M317.1 277 V267 Q317.1 264.2 319.9 264.2 L325.4 271.8 L330.9 264.2 Q333.8 264.2 333.8 267 V277"/>
<path d="M338.1 277 V268.4 Q338.1 264.2 342.3 264.2 H350.6 V277 M338.1 270.4 H350.6"/>
<path d="M352.7 264.2 H369 M360.9 264.2 V277"/>
<path d="M372.6 264.2 V277"/>
<rect x="377.5" y="264.2" width="15.2" height="11.6" rx="4"/>
<path d="M397.8 277 V264.6 L411.3 275.6 V263.2"/>
</g>
<text x="41.7" y="150.7" font-family="Liberation Sans" font-weight="bold" font-size="6.0" fill="#fff" stroke="#fff" stroke-width="0.15" textLength="38.7" lengthAdjust="spacing">SUIVI LE :</text>
<path d="M201 103.8 V154.6" stroke="#fff" stroke-opacity="0.85" stroke-width="1"/>
<text x="223.6" y="110.3" font-family="Liberation Sans" font-weight="bold" font-size="6.0" fill="#fff" stroke="#fff" stroke-width="0.2" textLength="176.4" lengthAdjust="spacing">CE CERTIFICAT EST FIÈREMENT DÉCERNÉ À</text>

<!-- paragraph -->
<g font-family="Liberation Sans" font-size="5.7" fill="#fff" fill-opacity="0.92">
<text x="40.4" y="180" textLength="218.6" lengthAdjust="spacingAndGlyphs">Formation complète sur l’utilisation de <tspan font-weight="bold">Thalia-app.fr.</tspan> Organisation et gestion</text>
<text x="40.4" y="191.8" textLength="227.8" lengthAdjust="spacingAndGlyphs">totale d’événements collectifs ou individuels. Création de documents intelligents</text>
<text x="40.4" y="204" textLength="156.6" lengthAdjust="spacingAndGlyphs">et personnalisation poussée des mails transactionnels.</text>
</g>
<g transform="translate(-220 -157)" fill="none" stroke="#fff" stroke-width="1.35" stroke-linejoin="round">
<path d="M261.1 399.6 V395.2 Q261.1 393.8 262.5 393.8 H265.4 M261.1 396.6 H264.6"/>
<path d="M266.6 399.6 V396.2 Q266.6 393.8 269 393.8 H271.6 V399.6 M266.6 397 H271.6"/>
<path d="M273.4 393.8 V399.6"/>
<path d="M274.6 393.8 H280 M277.3 393.8 V399.6"/>
<path d="M284.6 393.2 V398.9 H289.2"/>
<path d="M296.6 393.8 H292.2 Q290.6 393.8 290.6 395.4 V397.3 Q290.6 398.9 292.2 398.9 H296.6 M290.6 396.4 H295.8"/>
</g>
<g fill="#fff"><rect x="79.6" y="237.8" width="1.4" height="1.4"/><rect x="79.6" y="241.2" width="1.4" height="1.4"/></g>
<!-- signatures -->
<g fill="none" stroke="#fff" stroke-width="0.6" stroke-opacity="0.9" stroke-linecap="round" stroke-linejoin="round">
  <path d="M43.6 257.1 L80.9 262.7 L65.6 262.2 C68 263.5 70 264.6 71 265 L80.9 262.7 M66.5 252.9 L52.9 276.6 M71.6 253.7 L62.2 270.7 M75 252.9 L66.5 270.7"/>
  <path d="M123.3 271.5 L155.6 252.9 M147.1 247.8 L160.7 274.1 M135.2 256.3 L155.6 264.8 M123.3 271.5 L165.8 269 M147.1 247.8 L131.8 269.8 M135.2 256.3 L150 272 M128 268 L160 266"/>
</g>
<text x="38.2" y="294.9" font-family="Liberation Sans" font-size="7.2" fill="#fff" fill-opacity="0.8" textLength="60.8" lengthAdjust="spacingAndGlyphs">Nicolas Buchereau</text>
<text x="119.2" y="294.9" font-family="Liberation Sans" font-size="7.2" fill="#fff" fill-opacity="0.8" textLength="49.8" lengthAdjust="spacingAndGlyphs">Jeremy Esnault</text>

<!-- moon -->
<circle cx="388.7" cy="298.5" r="83.3" fill="#fff"/>
<circle cx="388.7" cy="298.5" r="79" fill="#ede46c"/>

<g transform="translate(-220 -157)">
<!-- planet left -->
<g>
  <ellipse cx="229" cy="251" rx="19.5" ry="9" transform="rotate(-35 229 251)" fill="#fff"/>
  <circle cx="214" cy="253" r="20.5" fill="#fff"/>
  <circle cx="214" cy="253" r="18" fill="#1f2437"/>
  <path d="M219 237 C224 239 228 242 230 246 L227 248 C225 244 222 241 217 239.5Z M208 263 C214 263 220 265.5 224 269 L221 271 C217 267.5 213 266 207 265.5Z" fill="#e9dc6a"/>
  <ellipse cx="229" cy="251" rx="16.8" ry="6.3" transform="rotate(-35 229 251)" fill="#ebdf6c" stroke="#1f2437" stroke-width="1.4"/>
  <path d="M216 258 C223 254 230 249 238 244" fill="none" stroke="#1f2437" stroke-width="1.6"/>
  <path d="M220 262 C222 259 228 255 232 254" fill="none" stroke="#1f2437" stroke-width="1.2"/>
  <ellipse cx="229.5" cy="246.3" rx="1.8" ry="2.4" fill="#fff"/>
</g>
<!-- stars streaks -->
<g transform="translate(604.5 185.5) rotate(-45)">
  <rect x="-3" y="-25.5" width="94" height="40.5" rx="12" fill="#fff"/>
  <rect x="34" y="10.5" width="23" height="13" rx="6.5" fill="#fff"/>
  <rect x="0" y="-22.5" width="88" height="34.5" rx="9" fill="#ebdf6a" stroke="#27306a" stroke-width="1.3"/>
  <rect x="37" y="13.5" width="17" height="7" rx="3.5" fill="#ebdf6a" stroke="#27306a" stroke-width="1.3"/>
  <rect x="14" y="-8" width="28" height="5" rx="2.5" fill="#fff" stroke="#27306a" stroke-width="1.2"/>
  <rect x="26" y="1.5" width="44" height="5" rx="2.5" fill="#fff" stroke="#27306a" stroke-width="1.2"/>
  <rect x="34" y="-17.5" width="60" height="4.5" rx="2.2" fill="#fff" stroke="#27306a" stroke-width="1.2"/>
  <path d="M10 -12 H26" stroke="#27306a" stroke-width="0.7"/>
</g>
<g transform="translate(642 205) rotate(-42)">
  <rect x="-3" y="-15" width="70" height="29" rx="12" fill="#fff"/>
  <rect x="0" y="-12" width="66" height="23" rx="9" fill="#ebdf6a" stroke="#27306a" stroke-width="1.2"/>
  <rect x="12" y="-9.5" width="40" height="4.5" rx="2.2" fill="#fff" stroke="#27306a" stroke-width="1.1"/>
  <rect x="16" y="-2" width="44" height="4.5" rx="2.2" fill="#fff" stroke="#27306a" stroke-width="1.1"/>
  <rect x="20" y="5" width="40" height="4.5" rx="2.2" fill="#fff" stroke="#27306a" stroke-width="1.1"/>
</g>
<path d="M595.1 171.1 Q595.6 165.4 600.1 168.9 L604.4 172.3 Q606.9 174.3 610.0 173.5 L615.3 172.2 Q620.8 170.8 618.9 176.2 L617.0 181.3 Q615.9 184.3 617.6 187.0 L620.5 191.6 Q623.6 196.5 617.8 196.3 L612.3 196.1 Q609.2 196.0 607.1 198.4 L603.6 202.6 Q599.9 207.0 598.3 201.5 L596.8 196.2 Q596.0 193.2 593.0 192.0 L588.0 190.0 Q582.6 187.8 587.4 184.6 L591.9 181.5 Q594.5 179.8 594.8 176.6 Z" fill="#ebdf6a" stroke="#fff" stroke-width="5.5" stroke-linejoin="round"/>
<path d="M595.1 171.1 Q595.6 165.4 600.1 168.9 L604.4 172.3 Q606.9 174.3 610.0 173.5 L615.3 172.2 Q620.8 170.8 618.9 176.2 L617.0 181.3 Q615.9 184.3 617.6 187.0 L620.5 191.6 Q623.6 196.5 617.8 196.3 L612.3 196.1 Q609.2 196.0 607.1 198.4 L603.6 202.6 Q599.9 207.0 598.3 201.5 L596.8 196.2 Q596.0 193.2 593.0 192.0 L588.0 190.0 Q582.6 187.8 587.4 184.6 L591.9 181.5 Q594.5 179.8 594.8 176.6 Z" fill="#ebdf6a" stroke="#27306a" stroke-width="1.3" stroke-linejoin="round"/>
<path d="M638.3 193.0 Q639.8 189.2 642.3 192.5 L644.6 195.7 Q646.0 197.5 648.3 197.6 L652.2 197.8 Q656.4 198.0 654.0 201.4 L651.7 204.6 Q650.4 206.5 651.0 208.7 L652.0 212.5 Q653.1 216.5 649.1 215.3 L645.4 214.1 Q643.2 213.4 641.3 214.7 L638.0 216.8 Q634.5 219.1 634.4 215.0 L634.4 211.0 Q634.4 208.7 632.6 207.3 L629.5 204.8 Q626.2 202.2 630.2 200.9 L633.9 199.6 Q636.1 198.9 636.9 196.7 Z" fill="#ebdf6a" stroke="#fff" stroke-width="5" stroke-linejoin="round"/>
<path d="M638.3 193.0 Q639.8 189.2 642.3 192.5 L644.6 195.7 Q646.0 197.5 648.3 197.6 L652.2 197.8 Q656.4 198.0 654.0 201.4 L651.7 204.6 Q650.4 206.5 651.0 208.7 L652.0 212.5 Q653.1 216.5 649.1 215.3 L645.4 214.1 Q643.2 213.4 641.3 214.7 L638.0 216.8 Q634.5 219.1 634.4 215.0 L634.4 211.0 Q634.4 208.7 632.6 207.3 L629.5 204.8 Q626.2 202.2 630.2 200.9 L633.9 199.6 Q636.1 198.9 636.9 196.7 Z" fill="#ebdf6a" stroke="#27306a" stroke-width="1.2" stroke-linejoin="round"/>

<!-- moon details -->
<g clip-path="url(#mc)">
<path fill-rule="evenodd" fill="#cfc45a" d="M529.7 455.5 A79 79 0 1 0 687.7 455.5 A79 79 0 1 0 529.7 455.5 Z M544 450 A76 76 0 1 0 696 450 A76 76 0 1 0 544 450 Z"/>
<path d="M556 477 C552 470 545 466 542 460 C540 455 548 452 556 452 C558 448 560 446 562 444" fill="#ede46c" stroke="#fff" stroke-width="1.6" stroke-linejoin="round"/>
<path d="M590 477 L603 455 C606 452 610 455 609 460 L606 477Z M620 477 L634 458 C637 455 640 458 639 462 L636 477Z" fill="#d2c75c"/>
<path d="M651 472 C649 464 650 457 655 451 M651 462 C654 460 657 463 659 466" stroke="#cbbd52" stroke-width="1.6" fill="none"/>
<path d="M585 460 L592 468" stroke="#fff" stroke-width="1.5"/>
</g>
<!-- astronaut sticker outline -->
<g fill="#fff" stroke="#fff" stroke-width="7" stroke-linejoin="round">
  <path d="M479.4 407.4 C480 403.5 482.5 401.3 485 401.3 C487.5 401.3 489.5 402 491 401.8 C492 399 493 396.5 495.5 396.2 C498.5 396 500.5 398 500 400.5 C499.5 402 499 403.5 500.5 404.5 L505.5 404.5 L522 403.5 L560 385 L594.5 376.4 C601 379 606 380 607.7 383 C610 387 610.5 393 609.3 395 C608 399 605 401 602.7 401.1 C605 404 604 410 602.7 414.3 C606 410 609 407 612.6 406 C614 404.5 615 403.8 615.9 403.6 C620 402.5 623 402.5 625.8 403.1 C630 404 634 405.5 635.6 407.7 C637.5 410 638.5 412.5 638.1 414.3 C637 418 635 420 632.3 420.8 C629 422 626 422.5 622.5 422.5 C620 424 618.5 425.5 617.5 427.4 C616 430 615 432 614.3 434 C613 438 612 442 610 445 C604 449 597 450.5 590 450 C582 450 575 448.5 570 446.5 C566 443 563 439 561.1 434.4 L541 417.3 L506.7 418.8 C500 419.2 495 418.8 492 417.6 C486 415 480 412 479.4 407.4 Z"/>
  <ellipse cx="542.8" cy="376.6" rx="33.2" ry="34.8"/>
</g>
<!-- body -->
<path d="M479.4 407.4 C480 403.5 482.5 401.3 485 401.3 C487.5 401.3 489.5 402 491 401.8 C492 399 493 396.5 495.5 396.2 C498.5 396 500.5 398 500 400.5 C499.5 402 499 403.5 500.5 404.5 L505.5 404.5 L522 403.5 L560 385 L594.5 376.4 C601 379 606 380 607.7 383 C610 387 610.5 393 609.3 395 C608 399 605 401 602.7 401.1 C605 404 604 410 602.7 414.3 C606 410 609 407 612.6 406 C614 404.5 615 403.8 615.9 403.6 C620 402.5 623 402.5 625.8 403.1 C630 404 634 405.5 635.6 407.7 C637.5 410 638.5 412.5 638.1 414.3 C637 418 635 420 632.3 420.8 C629 422 626 422.5 622.5 422.5 C620 424 618.5 425.5 617.5 427.4 C616 430 615 432 614.3 434 C613 438 612 442 610 445 C604 449 597 450.5 590 450 C582 450 575 448.5 570 446.5 C566 443 563 439 561.1 434.4 L541 417.3 L506.7 418.8 C500 419.2 495 418.8 492 417.6 C486 415 480 412 479.4 407.4 Z" fill="#f8f5e9" stroke="#1d2236" stroke-width="1.6" stroke-linejoin="round"/>
<g fill="none" stroke="#1d2236" stroke-width="1.1" stroke-linecap="round">
  <path d="M505.5 404.5 C507 408 507 414 506.7 418.6"/>
  <path d="M482.5 406.2 L488.5 407.4 M482.5 409.8 L487.9 411 M496 400.5 C497 402.5 496.5 404.5 495 405.5"/>
  <path d="M560 432.3 Q586 442 601.6 415.7 M562 437.5 Q588 450 601.6 431.3" stroke-width="1.3"/>
  <path d="M589.6 406 C595 404.5 600 403 602.7 401.1"/>
  <path d="M612.6 406 C614 412 616 420 617.5 427.4"/>
  <path d="M522 415.8 L536 414.8" stroke-width="0.8"/>
  <path d="M557 409.5 L574.6 433.4" stroke-width="0.9"/>
  <path d="M588 434 L591 438.5" stroke-width="0.9"/>
</g>
<circle cx="576.7" cy="439.8" r="2.4" fill="#1d2236"/>
<circle cx="576.7" cy="439.8" r="1.2" fill="#c9507f"/>
<!-- helmet -->
<ellipse cx="542.8" cy="376.6" rx="33.2" ry="34.8" fill="#f8f5e9" stroke="#1d2236" stroke-width="2"/>
<circle cx="542" cy="382" r="29.5" fill="#1c2134"/>
<circle cx="542" cy="382" r="27.6" fill="none" stroke="#f8f5e9" stroke-opacity="0.55" stroke-width="0.6"/>
<path d="M562 350 C566 353 569 357 571 362" stroke="#1d2236" stroke-width="0.8" fill="none"/>
<ellipse cx="547.8" cy="361.5" rx="8" ry="4.2" transform="rotate(10 547.8 361.5)" fill="#f4f1e6"/>
<ellipse cx="546" cy="368.4" rx="3.2" ry="1.6" transform="rotate(10 546 368.4)" fill="#f4f1e6"/>
<!-- right glove -->
<path d="M569.9 369.9 C573 366 578 365.5 581.4 366.6 C587 368 592 372 594.5 376.4 C597 380 598 388 591.2 392.9 C585 394.5 578 392.5 573.2 389.6 C569 387 566.5 383 567.5 378 Z" fill="#f8f5e9" stroke="#1d2236" stroke-width="1.3"/>
<path d="M573 372 L580 383 M577 369 L586 380 M594.5 376.4 C600 379 606 381 609 387" fill="none" stroke="#1d2236" stroke-width="1"/>
<path d="M591.2 392.9 L594 397" stroke="#1d2236" stroke-width="1.1"/>

<!-- rocket -->
<g transform="translate(621.8 341.5) rotate(26)">
  <path d="M-10 11.5 L-2.9 1 V12 Z M10 11.5 L2.9 1 V12 Z" fill="#ebdc5e" stroke="#5a3f7a" stroke-width="0.9" stroke-linejoin="round"/>
  <path d="M-2.9 14 V-11 C-2.9 -13.5 -1.6 -15.5 0 -17 C1.6 -15.5 2.9 -13.5 2.9 -11 V14 Z" fill="#fdfbf5" stroke="#5a3f7a" stroke-width="0.9"/>
  <path d="M-2.9 -11.5 C-2.9 -13.5 -1.6 -15.5 0 -17 C1.6 -15.5 2.9 -13.5 2.9 -11.5 Z" fill="#cf3f86"/>
  <path d="M-0.8 -6 V10" stroke="#c9c2d8" stroke-width="0.7"/>
  <path d="M-2 14.5 L0 20 L2 14.5 Z" fill="#c9c2b0"/>
</g>
<!-- sparkles -->
<g fill="#fff">
  <path d="M494.9 369 Q495.4 372.3 498.6 372.8 Q495.4 373.3 494.9 376.6 Q494.4 373.3 491.2 372.8 Q494.4 372.3 494.9 369Z"/>
  <path d="M491 377.8 Q491.3 379.5 493 379.8 Q491.3 380.1 491 381.8 Q490.7 380.1 489 379.8 Q490.7 379.5 491 377.8Z"/>
  <path d="M619.4 318.4 Q619.8 320.5 621.9 320.9 Q619.8 321.3 619.4 323.4 Q619 321.3 616.9 320.9 Q619 320.5 619.4 318.4Z"/>
  <path d="M634.9 341.8 Q635.3 343.9 637.4 344.3 Q635.3 344.7 634.9 346.8 Q634.5 344.7 632.4 344.3 Q634.5 343.9 634.9 341.8Z"/>
</g>
<!-- cursor -->
<g>
  <path d="M266 281 L271.2 286.2 L266 291.4 L260.8 286.2 Z" fill="#fff" opacity="0.9"/>
  <path d="M261.6 286.2 L263.4 285 V287.4Z M270.4 286.2 L268.6 285 V287.4Z M266 282 L264.8 283.8 H267.2Z" fill="#111"/>
  <path d="M266.3 286.6 V294 L268.3 292.2 L269.6 294.8 L270.8 294.2 L269.6 291.6 L272.2 291.4 Z" fill="#111" stroke="#fff" stroke-width="0.7" stroke-linejoin="round"/>
</g>
</g>
</g>
</svg>
<div class="a" style="left:218.5px;top:155.5px;width:3px;height:3px;background:#f4f4f4;border:0.6px solid #777;border-radius:0.5px"></div>
<div class="a" style="left:441.0px;top:155.5px;width:6px;height:3px;background:#f4f4f4;border:0.6px solid #777;border-radius:0.5px"></div>
<div class="a" style="left:666.5px;top:155.5px;width:3px;height:3px;background:#f4f4f4;border:0.6px solid #777;border-radius:0.5px"></div>
<div class="a" style="left:218.5px;top:314.0px;width:3px;height:6px;background:#f4f4f4;border:0.6px solid #777;border-radius:0.5px"></div>
<div class="a" style="left:666.5px;top:314.0px;width:3px;height:6px;background:#f4f4f4;border:0.6px solid #777;border-radius:0.5px"></div>
<div class="a" style="left:218.5px;top:475.5px;width:3px;height:3px;background:#f4f4f4;border:0.6px solid #777;border-radius:0.5px"></div>
<div class="a" style="left:441.0px;top:475.5px;width:6px;height:3px;background:#f4f4f4;border:0.6px solid #777;border-radius:0.5px"></div>
<div class="a" style="left:666.5px;top:475.5px;width:3px;height:3px;background:#f4f4f4;border:0.6px solid #777;border-radius:0.5px"></div>
</body></html>
